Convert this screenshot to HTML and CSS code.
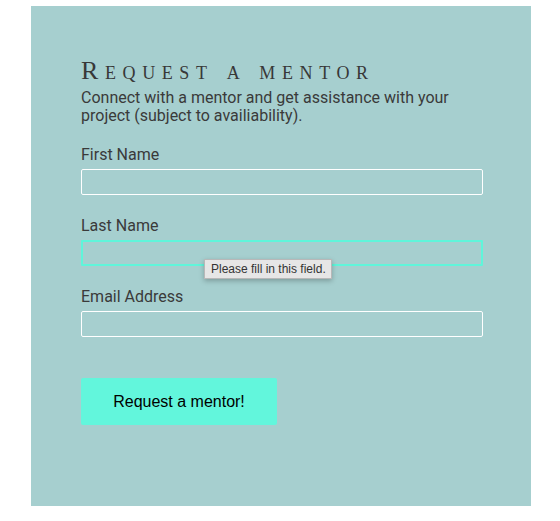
FILE: index.html
```html
<!DOCTYPE html>
<html lang="en">
<head>
<meta charset="utf-8">
<title>Request a mentor</title>
<link rel="stylesheet" href="styles.css">
</head>
<body>
<section class="panel">
  <h1 class="title">Request a mentor</h1>
  <p class="intro">Connect with a mentor and get assistance with your project (subject to availiability).</p>
  <form class="form">
    <div class="field">
      <label class="label" for="first">First Name</label>
      <input class="input" id="first" type="text">
    </div>
    <div class="field field-tip">
      <label class="label" for="last">Last Name</label>
      <input class="input input-focus" id="last" type="text">
      <div class="tooltip">Please fill in this field.</div>
    </div>
    <div class="field">
      <label class="label" for="email">Email Address</label>
      <input class="input" id="email" type="email">
    </div>
    <button class="button" type="button">Request a mentor!</button>
  </form>
</section>
</body>
</html>
```
FILE: styles.css
```css
html, body {
  margin: 0;
  padding: 0;
  background: #ffffff;
}
.panel {
  box-sizing: border-box;
  width: 500px;
  height: 500px;
  margin: 6px 0 0 31px;
  padding: 51px 48px 0 50px;
  background: #a6cfcf;
  font-family: Roboto, "Liberation Sans", sans-serif;
  color: #3a3a3a;
}
.title {
  margin: 0;
  font-family: "Liberation Serif", serif;
  font-weight: normal;
  font-size: 26px;
  line-height: 28px;
  font-variant: small-caps;
  letter-spacing: 6.6px;
  color: #383838;
}
.intro {
  margin: 4px 0 0;
  font-size: 16px;
  line-height: 18px;
}
.form {
  display: flex;
  flex-direction: column;
  gap: 22px;
  margin-top: 21px;
  width: 402px;
}
.field {
  display: flex;
  flex-direction: column;
  gap: 5px;
}
.field-tip {
  position: relative;
}
.label {
  font-size: 16px;
  line-height: 18px;
}
.input {
  box-sizing: border-box;
  display: block;
  width: 402px;
  height: 26px;
  margin: 0;
  padding: 0;
  border: 1px solid #ffffff;
  border-radius: 2px;
  background: transparent;
  outline: none;
}
.input-focus {
  border: 2px solid #5ff5da;
  border-radius: 1px;
}
.tooltip {
  position: absolute;
  left: 123px;
  top: 42px;
  padding: 3px 5px 3px 6px;
  background: #e6e6e6;
  border: 1px solid #b8b8b8;
  box-shadow: 0 2px 5px rgba(0,0,0,0.25);
  font-family: "Liberation Sans", Arial, sans-serif;
  font-size: 12px;
  line-height: 12px;
  color: #333333;
  white-space: nowrap;
}
.button {
  margin-top: 19px;
  width: 196px;
  height: 47px;
  border: none;
  border-radius: 2px;
  background: #62f6dc;
  font-family: "Liberation Sans", Arial, sans-serif;
  font-size: 16px;
  color: #000000;
  cursor: pointer;
}
```
